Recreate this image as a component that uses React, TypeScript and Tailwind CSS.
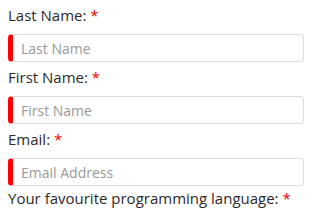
import React from "react";

const fields = [
  { label: "Last Name:", ph: "Last Name" },
  { label: "First Name:", ph: "First Name" },
  { label: "Email:", ph: "Email Address" },
];

export default function App() {
  return (
    <div className="w-[325px] h-[213px] overflow-hidden bg-white pl-2 pr-[21px] text-[#2b2b2b]" style={{ fontFamily: '"Open Sans", sans-serif' }}>
      {fields.map((f) => (
        <div key={f.label} className="flex flex-col">
          <label className="mt-[4px] text-[15px] leading-[22px]">
            {f.label} <span className="text-[#e00]">*</span>
          </label>
          <input
            className="mt-[8px] h-[28px] w-full rounded-[4px] border border-[#ddd] border-l-[5px] border-l-[#f00] pl-[8px] text-[14px] outline-none placeholder:text-[#999]"
            placeholder={f.ph}
          />
        </div>
      ))}
      <label className="block mt-[1px] text-[15px] leading-[22px]">
        Your favourite programming language: <span className="text-[#e00]">*</span>
      </label>
    </div>
  );
}
